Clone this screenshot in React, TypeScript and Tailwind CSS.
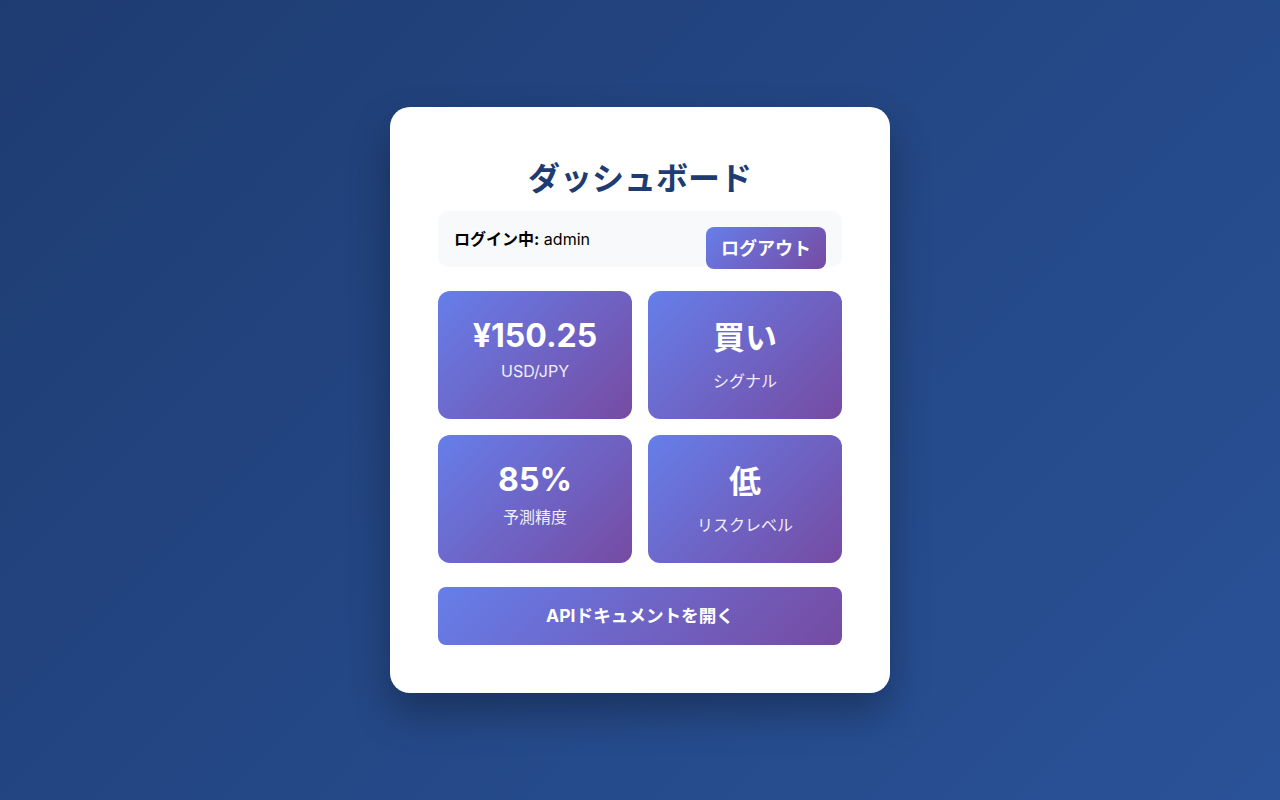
export default function App() {
  const stats = [
    { value: "¥150.25", label: "USD/JPY", latinValue: true, latinLabel: true },
    { value: "買い", label: "シグナル", latinValue: false, latinLabel: false },
    { value: "85%", label: "予測精度", latinValue: true, latinLabel: false },
    { value: "低", label: "リスクレベル", latinValue: false, latinLabel: false },
  ];

  return (
    <div className="min-h-screen w-full flex items-center justify-center bg-[linear-gradient(135deg,#1e3c72_0%,#2a5298_100%)] font-['Inter','Noto_Sans_CJK_JP',sans-serif]">
      <div className="w-[500px] bg-white rounded-[20px] p-12 shadow-[0_20px_40px_rgba(0,0,0,0.3)]">
        {/* Header */}
        <h1 className="text-center text-[32px] font-bold text-[#1e3c72] mb-[8px]">
          ダッシュボード
        </h1>

        {/* User info */}
        <div className="h-[56px] bg-[#f8f9fa] rounded-[10px] px-4 pt-4 flex justify-between items-start">
          <p className="text-[16px] text-black leading-[24px]">
            <span className="font-bold">ログイン中:</span> admin
          </p>
          <button className="w-[120px] h-[42px] rounded-lg text-white text-[18px] font-bold bg-[linear-gradient(135deg,#667eea_0%,#764ba2_100%)]">
            ログアウト
          </button>
        </div>

        {/* Stats */}
        <div className="grid grid-cols-2 gap-4 mt-6">
          {stats.map((s) => (
            <div
              key={s.label}
              className="h-[128px] rounded-xl px-5 pt-6 text-center text-white bg-[linear-gradient(135deg,#667eea_0%,#764ba2_100%)]"
            >
              <div
                className={
                  s.latinValue
                    ? "text-[32px] font-bold leading-[42px]"
                    : "text-[32px] font-bold leading-[46px]"
                }
              >
                {s.value}
              </div>
              <div
                className={
                  s.latinLabel
                    ? "text-[16px] opacity-90 mt-1 leading-[20px]"
                    : s.latinValue
                      ? "text-[16px] opacity-90 mt-1 leading-[24px]"
                      : "text-[16px] opacity-90 mt-2 leading-[24px]"
                }
              >
                {s.label}
              </div>
            </div>
          ))}
        </div>

        {/* API docs */}
        <button className="w-full h-[58px] mt-6 rounded-lg text-white text-[17.6px] font-bold bg-[linear-gradient(135deg,#667eea_0%,#764ba2_100%)]">
          APIドキュメントを開く
        </button>
      </div>
    </div>
  );
}
